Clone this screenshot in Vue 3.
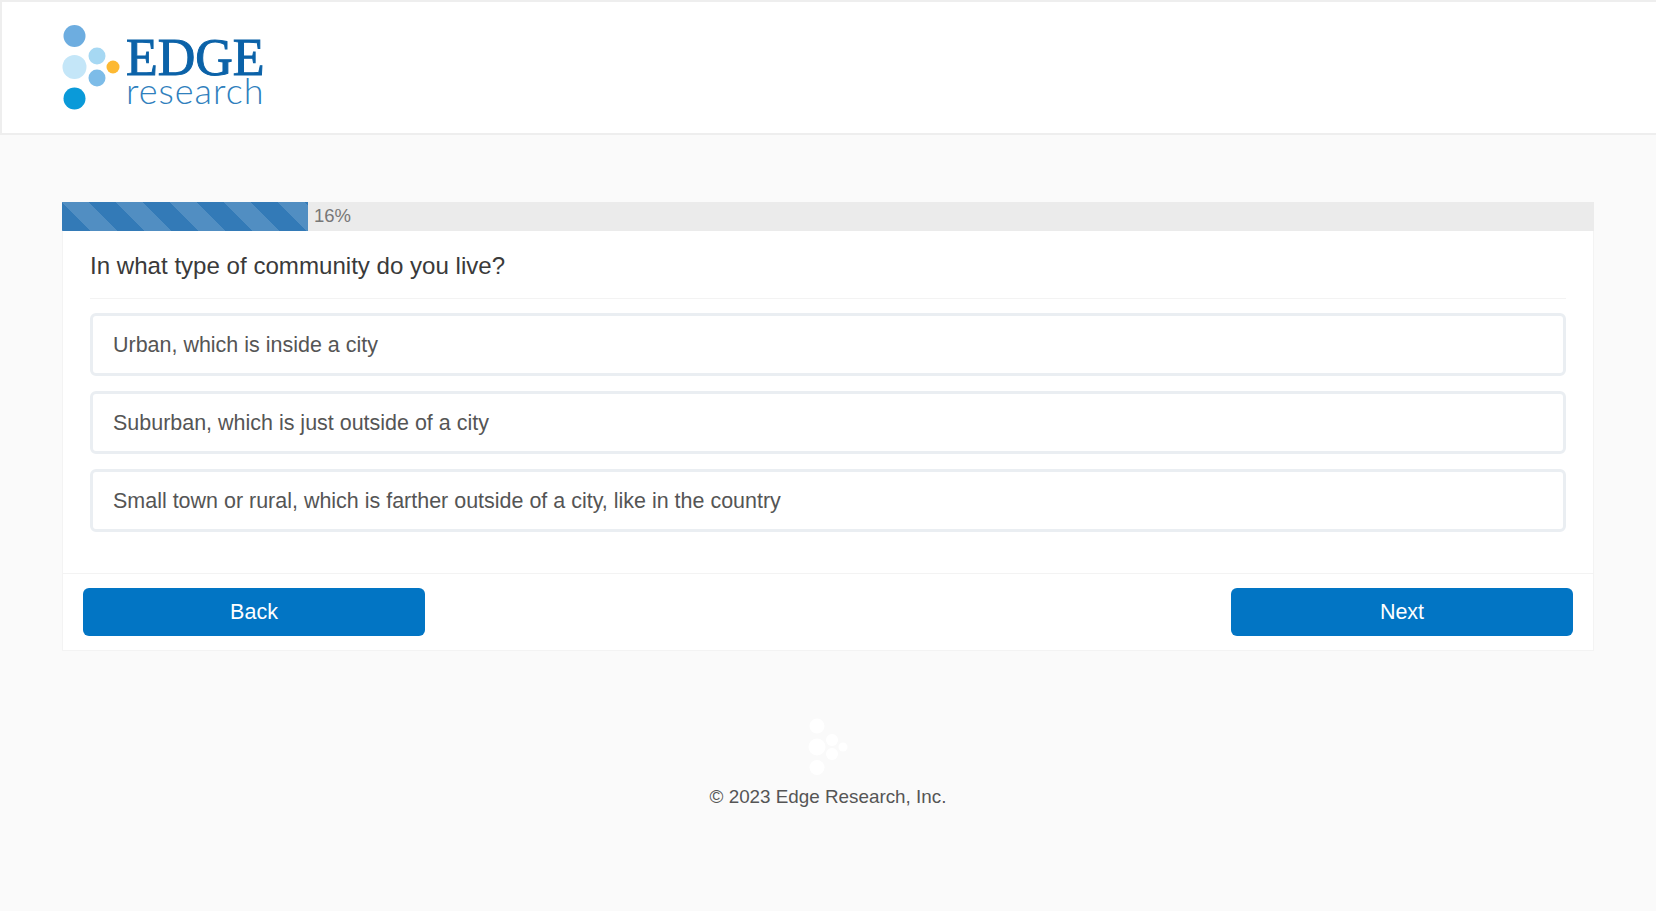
<script setup>
const options = [
  'Urban, which is inside a city',
  'Suburban, which is just outside of a city',
  'Small town or rural, which is farther outside of a city, like in the country',
]
</script>

<template>
  <div class="page">
    <header class="header">
      <div class="logo">
        <svg class="logo-mark" width="62" height="90" viewBox="0 0 62 90">
          <circle cx="14.5" cy="11" r="11" fill="#6dade0" />
          <circle cx="37" cy="31" r="8.5" fill="#a6d8f3" />
          <circle cx="14.5" cy="42" r="12" fill="#c4e6f8" />
          <circle cx="37" cy="53" r="8.5" fill="#7dbce8" />
          <circle cx="53" cy="42" r="6.5" fill="#fdb933" />
          <circle cx="14.5" cy="73.5" r="11" fill="#0a9ad9" />
        </svg>
        <div class="wordmark">
          <span class="edge">EDGE</span>
          <span class="research">research</span>
        </div>
      </div>
    </header>

    <main class="main">
      <div class="progress">
        <div class="progress-fill"></div>
        <span class="progress-label">16%</span>
      </div>
      <section class="card">
        <div class="card-body">
          <h1 class="question">In what type of community do you live?</h1>
          <div class="options">
            <div v-for="o in options" :key="o" class="option">{{ o }}</div>
          </div>
        </div>
        <div class="card-footer">
          <button class="btn">Back</button>
          <button class="btn">Next</button>
        </div>
      </section>
    </main>

    <footer class="footer">
      <svg class="footer-mark" width="40" height="58" viewBox="0 0 40 58">
        <circle cx="9" cy="8" r="7.5" fill="#fff" />
        <circle cx="24" cy="22" r="6" fill="#fff" />
        <circle cx="9" cy="29" r="8.5" fill="#fff" />
        <circle cx="24" cy="36" r="6" fill="#fff" />
        <circle cx="35" cy="29" r="4.5" fill="#fff" />
        <circle cx="9" cy="49.5" r="7.5" fill="#fff" />
      </svg>
      <p class="copyright">© 2023 Edge Research, Inc.</p>
    </footer>
  </div>
</template>

<style>
html, body { margin: 0; background: #fafafa; }
</style>

<style scoped>
.page {
  min-height: 911px;
  background: #fafafa;
  font-family: "Liberation Sans", Arial, sans-serif;
  color: #333;
}
.header {
  box-sizing: border-box;
  height: 135px;
  background: #fff;
  border: 2px solid #eeeeee;
  border-right-width: 0;
  padding: 23px 0 0 58px;
}
.logo { display: flex; align-items: flex-start; }
.logo-mark { display: block; flex: none; }
.wordmark { display: flex; flex-direction: column; margin-left: 4px; width: 142px; }
.edge {
  font-family: "Liberation Serif", serif;
  font-size: 52px;
  line-height: 40px;
  margin-top: 13px;
  color: #0b62a8;
  -webkit-text-stroke: 1px #0b62a8;
}
.research {
  font-family: Lato, sans-serif;
  font-weight: 300;
  font-size: 36px;
  letter-spacing: 1px;
  line-height: 30px;
  margin-top: -3px;
  color: #2f80bd;
}
.main { padding: 67px 62px 0; }
.progress {
  display: flex;
  align-items: center;
  height: 29px;
  background: #ebebeb;
}
.progress-fill {
  width: 245.5px;
  height: 100%;
  background-color: #337ab7;
  background-image: linear-gradient(45deg, rgba(255,255,255,.15) 25%, transparent 25%, transparent 50%, rgba(255,255,255,.15) 50%, rgba(255,255,255,.15) 75%, transparent 75%);
  background-size: 54px 54px;
}
.progress-label { margin-left: 6.5px; margin-top: -1px; font-size: 18.5px; color: #777; }
.card {
  background: #fff;
  border: 1px solid #f3f3f3;
  border-top: 0;
}
.card-body { padding: 0 27px 41px; }
.question {
  margin: 0;
  padding: 17px 0 15px;
  font-size: 24.1px;
  font-weight: 400;
  line-height: 35px;
  border-bottom: 1px solid #f3f3f3;
  color: #3a3a3a;
}
.options { display: flex; flex-direction: column; gap: 15px; margin-top: 14px; }
.option {
  box-sizing: border-box;
  height: 63px;
  display: flex;
  align-items: center;
  padding: 1px 20px 0;
  border: 3px solid #eaeef2;
  border-radius: 6px;
  font-size: 21.48px;
  color: #555;
}
.card-footer {
  display: flex;
  justify-content: space-between;
  padding: 14px 20px;
  border-top: 1px solid #f3f3f3;
}
.btn {
  width: 342px;
  height: 48px;
  border: 0;
  border-radius: 6px;
  background: #0275c4;
  color: #fff;
  font-family: inherit;
  font-size: 21.5px;
}
.footer { display: flex; flex-direction: column; align-items: center; margin-top: 67px; }
.footer-mark { display: block; }
.copyright { margin: 8px 0 0; font-size: 18.84px; line-height: 26px; color: #555; }
</style>
